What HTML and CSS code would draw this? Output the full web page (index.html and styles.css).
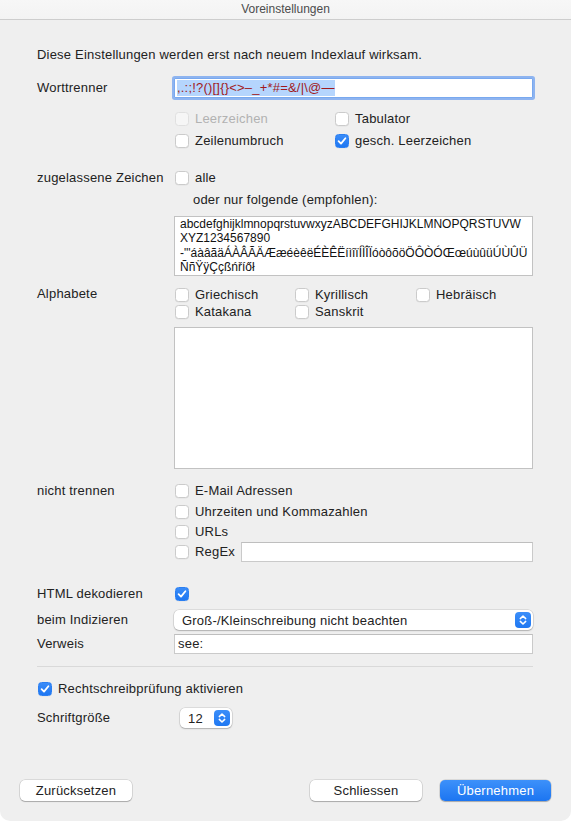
FILE: index.html
```html
<!DOCTYPE html>
<html lang="de">
<head>
<meta charset="utf-8">
<title>Voreinstellungen</title>
<link rel="stylesheet" href="styles.css">
</head>
<body>
<div class="window">
  <div class="titlebar">Voreinstellungen</div>
  <div class="content">
    <p class="intro">Diese Einstellungen werden erst nach neuem Indexlauf wirksam.</p>

    <div class="row r-wort">
      <div class="label">Worttrenner</div>
      <div class="field focus"><span class="sel">,.:;!?()[]{}&lt;&gt;–_+*#=&amp;/|\@—</span></div>
    </div>

    <div class="row r-ws">
      <div></div>
      <div class="checks ws-grid">
        <div class="cb disabled"><span class="box"></span>Leerzeichen</div>
        <div class="cb"><span class="box"></span>Tabulator</div>
        <div class="cb"><span class="box"></span>Zeilenumbruch</div>
        <div class="cb"><span class="box on"><svg viewBox="0 0 12 12"><path d="M2.6 6.2 L5 8.6 L9.4 3.2" fill="none" stroke="#fff" stroke-width="1.8" stroke-linecap="round" stroke-linejoin="round"/></svg></span>gesch. Leerzeichen</div>
      </div>
    </div>

    <div class="row r-zug">
      <div class="label">zugelassene Zeichen</div>
      <div class="cb"><span class="box"></span>alle</div>
    </div>

    <div class="row r-oder">
      <div></div>
      <div class="sub">oder nur folgende (empfohlen):</div>
    </div>

    <div class="row r-ta">
      <div></div>
      <div class="textarea">abcdefghijklmnopqrstuvwxyzABCDEFGHIJKLMNOPQRSTUVW<br>XYZ1234567890<br>-"'áàâãäÁÀÂÃÄÆæéèêëÉÈÊËíìîïÍÌÎÏóòôõöÖÔÒÓŒœúùûüÚÙÛÜ<br>ÑñŸÿÇçßńříőł</div>
    </div>

    <div class="row r-alpha">
      <div class="label">Alphabete</div>
      <div class="alpha-grid">
        <div class="cb"><span class="box"></span>Griechisch</div>
        <div class="cb"><span class="box"></span>Kyrillisch</div>
        <div class="cb"><span class="box"></span>Hebräisch</div>
        <div class="cb"><span class="box"></span>Katakana</div>
        <div class="cb"><span class="box"></span>Sanskrit</div>
      </div>
    </div>

    <div class="row r-box">
      <div></div>
      <div class="listbox"></div>
    </div>

    <div class="row r-nicht">
      <div class="label">nicht trennen</div>
      <div class="nicht-list">
        <div class="cb first"><span class="box"></span>E-Mail Adressen</div>
        <div class="cb"><span class="box"></span>Uhrzeiten und Kommazahlen</div>
        <div class="cb"><span class="box"></span>URLs</div>
        <div class="regex"><div class="cb"><span class="box"></span>RegEx</div><div class="field regex-field"></div></div>
      </div>
    </div>

    <div class="row r-html">
      <div class="label">HTML dekodieren</div>
      <div class="cb"><span class="box on"><svg viewBox="0 0 12 12"><path d="M2.6 6.2 L5 8.6 L9.4 3.2" fill="none" stroke="#fff" stroke-width="1.8" stroke-linecap="round" stroke-linejoin="round"/></svg></span></div>
    </div>

    <div class="row r-beim">
      <div class="label">beim Indizieren</div>
      <div class="popup"><span>Groß-/Kleinschreibung nicht beachten</span><span class="stepper"><svg viewBox="0 0 16 16"><path d="M5.3 6.6 L8 4 L10.7 6.6 M5.3 9.4 L8 12 L10.7 9.4" fill="none" stroke="#fff" stroke-width="1.5" stroke-linecap="round" stroke-linejoin="round"/></svg></span></div>
    </div>

    <div class="row r-verweis">
      <div class="label">Verweis</div>
      <div class="field">see:</div>
    </div>

    <div class="separator"></div>

    <div class="r-recht">
      <div class="cb"><span class="box on"><svg viewBox="0 0 12 12"><path d="M2.6 6.2 L5 8.6 L9.4 3.2" fill="none" stroke="#fff" stroke-width="1.8" stroke-linecap="round" stroke-linejoin="round"/></svg></span>Rechtschreibprüfung aktivieren</div>
    </div>

    <div class="row r-schrift">
      <div class="label">Schriftgröße</div>
      <div class="popup small"><span>12</span><span class="stepper"><svg viewBox="0 0 16 16"><path d="M5.3 6.6 L8 4 L10.7 6.6 M5.3 9.4 L8 12 L10.7 9.4" fill="none" stroke="#fff" stroke-width="1.5" stroke-linecap="round" stroke-linejoin="round"/></svg></span></div>
    </div>
  </div>

  <div class="footer">
    <button class="btn">Zurücksetzen</button>
    <button class="btn push-right">Schliessen</button>
    <button class="btn primary">Übernehmen</button>
  </div>
</div>
</body>
</html>
```

FILE: styles.css
```css
* { box-sizing: border-box; }
html, body { margin: 0; padding: 0; background: #ffffff; }
body {
  font-family: "Liberation Sans", Arial, sans-serif;
  font-size: 13px;
  letter-spacing: 0.2px;
  color: #222;
}
.window {
  width: 571px;
  height: 821px;
  background: #efefef;
  border-radius: 0 0 10px 10px;
  display: flex;
  flex-direction: column;
  overflow: hidden;
}
.titlebar {
  height: 20px;
  line-height: 19px;
  text-align: center;
  font-size: 12px;
  letter-spacing: 0;
  color: #4c4c4c;
  background: linear-gradient(#f7f7f7, #f3f3f3);
  border-bottom: 1px solid #cdcdcd;
}
.content { padding: 27px 38px 0 37px; }
.intro { margin: 0; line-height: 16px; }

.row {
  display: grid;
  grid-template-columns: 137px 1fr;
  align-items: center;
}
.label { line-height: 16px; }

.r-wort { margin-top: 15px; height: 20px; }
.r-ws { margin-top: 10px; }
.r-zug { margin-top: 16px; height: 20px; }
.r-oder { margin-top: 4px; }
.r-ta { margin-top: 8px; }
.r-alpha { margin-top: 10px; align-items: start; }
.r-box { margin-top: 7px; }
.r-nicht { margin-top: 11px; align-items: start; }
.r-nicht .label { line-height: 22px; }
.r-html { margin-top: 22px; height: 20px; }
.r-beim { margin-top: 6px; height: 20px; }
.r-verweis { margin-top: 4px; height: 20px; }
.r-recht { margin-top: 12px; height: 20px; display: flex; align-items: center; }
.r-schrift { margin-top: 9px; height: 20px; }

.sub { line-height: 16px; padding-left: 19px; }

/* checkboxes */
.cb {
  display: flex;
  align-items: center;
  gap: 6px;
  line-height: 16px;
  white-space: nowrap;
}
.box {
  flex: none;
  width: 14px;
  height: 14px;
  margin-left: 1px;
  border-radius: 3.5px;
  background: #fff;
  border: 1px solid #cbcbcb;
  box-shadow: 0 0.5px 0.5px rgba(0,0,0,0.06);
  display: flex;
  align-items: center;
  justify-content: center;
}
.box svg { width: 12px; height: 12px; display: block; }
.box.on {
  background: linear-gradient(#3a8cf8, #1e77f2);
  border-color: #2a7ff2;
}
.cb.disabled { color: #b2b2b2; }
.cb.disabled .box { background: #f6f6f6; border-color: #e0e0e0; box-shadow: none; }

.ws-grid {
  display: grid;
  grid-template-columns: 160px 1fr;
  grid-auto-rows: 22px;
  align-items: center;
}
.alpha-grid {
  display: grid;
  grid-template-columns: 120px 121px 1fr;
  grid-auto-rows: 17px;
  align-items: center;
}
.nicht-list { display: flex; flex-direction: column; }
.nicht-list > .cb, .nicht-list > .regex { height: 20px; }
.nicht-list > .cb.first { height: 22px; }
.regex { display: flex; align-items: center; }
.regex .cb { width: 67px; }
.regex-field { flex: 1; height: 21px; }

/* fields */
.field {
  height: 20px;
  background: #fff;
  border: 1px solid #cacaca;
  border-top-color: #bebebe;
  padding: 0 3px;
  display: flex;
  align-items: center;
  line-height: 16px;
  white-space: nowrap;
  overflow: hidden;
}
.field.focus {
  border-color: #79a9ef;
  box-shadow: 0 0 0 2px rgba(110, 160, 240, 0.75);
  border-radius: 1px;
  padding-left: 2px;
}
.sel {
  background: #b5d5fd;
  color: #a11a1c;
  line-height: 16px;
}
.textarea {
  height: 60px;
  background: #fff;
  border: 1px solid #c2c2c2;
  padding: 0 5px;
  font-size: 12px;
  letter-spacing: 0;
  line-height: 14.3px;
  color: #111;
  white-space: nowrap;
  overflow: hidden;
}
.listbox {
  height: 142px;
  background: #fff;
  border: 1px solid #c2c2c2;
}

/* popups */
.popup {
  height: 20px;
  background: #fff;
  border-radius: 5px;
  box-shadow: 0 0 0 0.5px rgba(0,0,0,0.16), 0 1px 1.5px rgba(0,0,0,0.2);
  display: flex;
  align-items: center;
  justify-content: space-between;
  padding: 0 2px 0 8px;
}
.popup.small { width: 52px; margin-left: 6px; }
.stepper {
  width: 16px;
  height: 16px;
  border-radius: 4px;
  background: linear-gradient(#3b8ef9, #1f78f2);
  display: flex;
}
.stepper svg { width: 16px; height: 16px; display: block; }

.separator {
  margin-top: 12px;
  height: 1px;
  background: #d9d9d9;
}

/* footer */
.footer {
  margin-top: auto;
  padding: 0 20px 20px;
  display: flex;
  align-items: center;
  gap: 18px;
}
.btn {
  height: 21px;
  width: 112px;
  border: none;
  border-radius: 5px;
  background: #fff;
  box-shadow: 0 0 0 0.5px rgba(0,0,0,0.18), 0 1px 1px rgba(0,0,0,0.22);
  font-family: inherit;
  font-size: 13px;
  letter-spacing: 0.2px;
  color: #222;
  padding: 0;
}
.push-right { margin-left: auto; }
.btn.primary {
  width: 111px;
  color: #fff;
  background: linear-gradient(#3d91fa, #1c75f1);
}
```
